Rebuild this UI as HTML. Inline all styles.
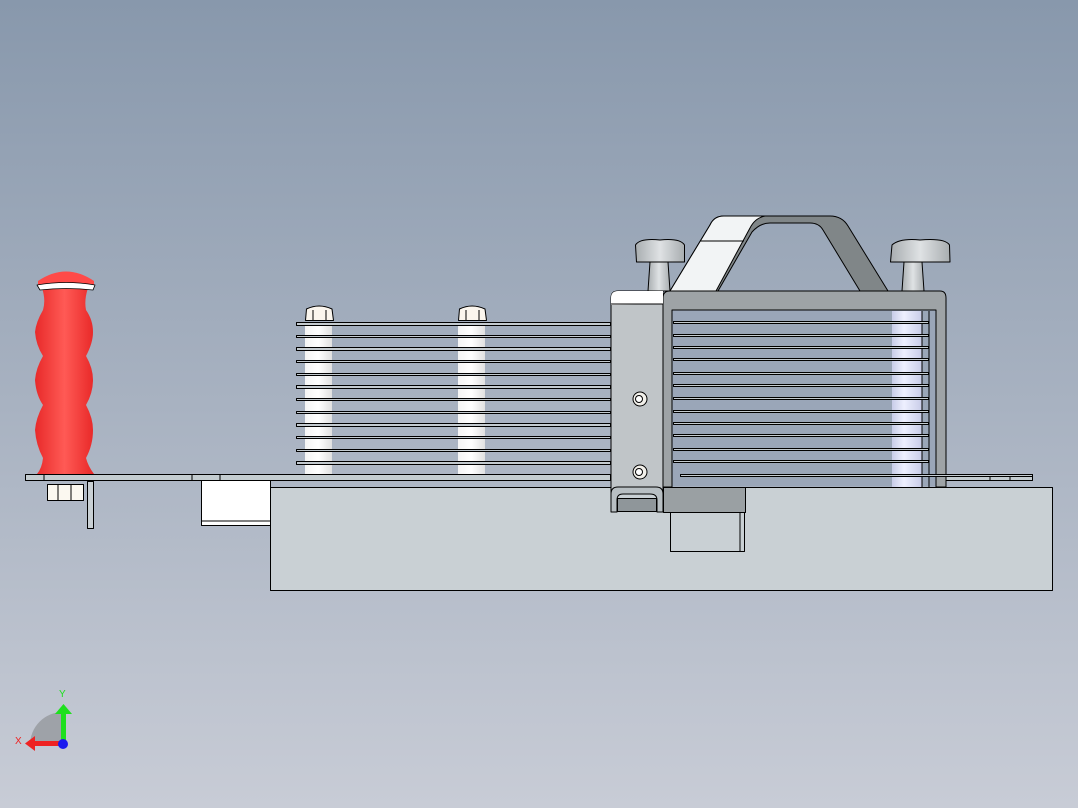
<!DOCTYPE html>
<html><head><style>html,body{margin:0;padding:0;width:1078px;height:808px;overflow:hidden}</style></head>
<body>
<svg width="1078" height="808" viewBox="0 0 1078 808" xmlns="http://www.w3.org/2000/svg" stroke-linejoin="round">
<defs>
<linearGradient id="bg" x1="0" y1="0" x2="0" y2="1"><stop offset="0" stop-color="#8898ac"/><stop offset="1" stop-color="#c8ccd6"/></linearGradient>
<linearGradient id="red" x1="0" y1="0" x2="1" y2="0"><stop offset="0" stop-color="#e82a2a"/><stop offset="0.5" stop-color="#ff5a55"/><stop offset="1" stop-color="#e82828"/></linearGradient>
<linearGradient id="pil" x1="0" y1="0" x2="1" y2="0"><stop offset="0" stop-color="#c8cce8"/><stop offset="0.4" stop-color="#eef0ff"/><stop offset="1" stop-color="#c8cce8"/></linearGradient>
<linearGradient id="col" x1="0" y1="0" x2="1" y2="0"><stop offset="0" stop-color="#f4f4f4"/><stop offset="0.5" stop-color="#ffffff"/><stop offset="1" stop-color="#e0e0e0"/></linearGradient>
<linearGradient id="knob" x1="0" y1="0" x2="1" y2="0"><stop offset="0" stop-color="#a8adb0"/><stop offset="0.5" stop-color="#dfe2e4"/><stop offset="1" stop-color="#a8adb0"/></linearGradient>
</defs>
<rect width="1078" height="808" fill="url(#bg)"/>
<g stroke="#000" stroke-width="1">
<rect x="270.5" y="487.5" width="782" height="103" fill="#c9d0d4"/>
<rect x="201.5" y="480.5" width="69" height="45" fill="#fff"/>
<line x1="201" y1="521" x2="270" y2="521"/>
<rect x="670.5" y="487.5" width="74" height="64" fill="#c9d0d4"/>
<line x1="740" y1="497" x2="740" y2="551"/>
<rect x="25.5" y="474.5" width="585" height="6" fill="#c4ccd0"/>
<rect x="610.5" y="474.5" width="422" height="6" fill="#c4ccd0"/>
<line x1="44" y1="474" x2="44" y2="481"/><line x1="192" y1="474" x2="192" y2="481"/><line x1="220" y1="474" x2="220" y2="481"/>
<line x1="990" y1="474" x2="990" y2="481"/><line x1="1010" y1="474" x2="1010" y2="481"/>
<rect x="87.5" y="481.5" width="6" height="47" fill="#c9d0d4"/>
<rect x="47.5" y="484.5" width="36" height="16" fill="#fbf8f0"/>
<line x1="58" y1="484" x2="58" y2="500"/><line x1="71" y1="484" x2="71" y2="500"/>
<path d="M42 288 Q46 300 43 310 Q36 322 35 332 Q36 345 43 356 Q36 368 35 380 Q36 395 43 405 Q36 418 35 430 Q36 445 43 458 Q42 468 37 474 L94 474 Q88 466 86 458 Q93 445 93 430 Q93 418 86 405 Q93 393 93 380 Q93 368 86 356 Q93 343 93 332 Q93 320 86 310 Q84 300 88 288 Z" fill="url(#red)" stroke="none"/>
<path d="M38 281 Q66 262 94 281 L94 286 L38 286 Z" fill="#ff4a48" stroke="none"/>
<path d="M37 285 Q66 280 95 285 L93 290 Q66 287 40 290 Z" fill="#fff" stroke-width="0.8"/>
<rect x="305" y="322" width="27" height="152" fill="url(#col)" stroke="none"/>
<rect x="458" y="322" width="27" height="152" fill="url(#col)" stroke="none"/>
<g fill="#c4cbd0">
<rect x="296.5" y="322.5" width="314" height="3"/><rect x="296.5" y="335.5" width="314" height="2"/><rect x="296.5" y="347.5" width="314" height="3"/><rect x="296.5" y="360.5" width="314" height="2"/><rect x="296.5" y="373.5" width="314" height="2"/><rect x="296.5" y="385.5" width="314" height="3"/><rect x="296.5" y="398.5" width="314" height="2"/><rect x="296.5" y="411.5" width="314" height="2"/><rect x="296.5" y="423.5" width="314" height="3"/><rect x="296.5" y="436.5" width="314" height="2"/><rect x="296.5" y="449.5" width="314" height="2"/><rect x="296.5" y="461.5" width="314" height="3"/>
</g>
<path d="M305.5 320.5 L306.5 309 Q319 303 332 309 L333.5 320.5 Z" fill="#fbf6ee"/>
<line x1="313" y1="310" x2="313" y2="320"/><line x1="326" y1="310" x2="326" y2="320"/>
<path d="M458.5 320.5 L459.5 309 Q472 303 485 309 L486.5 320.5 Z" fill="#fbf6ee"/>
<line x1="466" y1="310" x2="466" y2="320"/><line x1="479" y1="310" x2="479" y2="320"/>
<path d="M670 291 L710 225 Q714 216 724 216 L830 216 Q842 216 848 226 L888 291 L860 291 L823 230 Q819 223 810 223 L770 223 Q760 223 752 232 L718 291 Z" fill="#808688"/>
<path d="M670 291 L710 225 Q714 216 724 216 L765 216 Q755 218 750 228 L716 291 Z" fill="#f2f4f5"/>
<line x1="700" y1="241" x2="744" y2="241"/>
<path d="M648 291 L650 262 L668 262 L670 291 Z" fill="url(#knob)"/>
<path d="M636.5 262 L635.5 245 Q640 238 660 240 Q680 238 684.5 245 L684.5 262 Z" fill="url(#knob)"/>
<path d="M902 291 L904 262 L922 262 L924 291 Z" fill="url(#knob)"/>
<path d="M890.5 262 L892 245 Q900 238 920 240 Q945 238 949.5 245 L950 262 Z" fill="url(#knob)"/>
<path d="M663 487 L663 298 Q663 291 670 291 L940 291 Q946 291 946 298 L946 487 L936 487 L936 310 L672 310 L672 487 Z" fill="#9ea3a6"/>
<rect x="672.5" y="310.5" width="263" height="176" fill="#9aa6b8" stroke="none"/>
<rect x="892" y="311" width="30" height="176" fill="url(#pil)" stroke="none"/>
<line x1="922" y1="311" x2="922" y2="487"/><line x1="929" y1="311" x2="929" y2="487"/>
<g fill="#c4cbd0">
<rect x="673.5" y="321.5" width="255" height="2"/><rect x="673.5" y="334.5" width="255" height="2"/><rect x="673.5" y="346.5" width="255" height="2"/><rect x="673.5" y="358.5" width="255" height="2"/><rect x="673.5" y="372.5" width="255" height="2"/><rect x="673.5" y="384.5" width="255" height="2"/><rect x="673.5" y="397.5" width="255" height="2"/><rect x="673.5" y="410.5" width="255" height="2"/><rect x="673.5" y="422.5" width="255" height="2"/><rect x="673.5" y="434.5" width="255" height="2"/><rect x="673.5" y="448.5" width="255" height="2"/><rect x="673.5" y="460.5" width="255" height="2"/>
</g>
<rect x="680.5" y="474.5" width="352" height="2" fill="#c4cbd0"/>
<path d="M611 493 L611 298 Q611 291 618 291 L663 291 L663 493 Z" fill="#c0c5c8"/>
<path d="M611 305 L611 298 Q611 291 618 291 L663 291 L663 304 Z" fill="#fff" stroke="none"/>
<line x1="611" y1="304" x2="663" y2="304"/>
<circle cx="640" cy="399" r="7" fill="#f2f0ea"/><circle cx="639" cy="399" r="3.5" fill="#fff"/>
<circle cx="640" cy="472" r="7" fill="#f2f0ea"/><circle cx="639" cy="472" r="3.5" fill="#fff"/>
<path d="M611 512 L611 494 Q611 487 618 487 L656 487 Q663 487 663 494 L663 512 L657 512 L657 500 Q657 494 650 494 L623 494 Q617 494 617 500 L617 512 Z" fill="#b8bfc3"/>
<rect x="617.5" y="498.5" width="39" height="13" fill="#8f969a"/>
<rect x="663.5" y="487.5" width="82" height="25" fill="#9aa0a3"/>
</g>
<path d="M30 745 A33 33 0 0 1 63 712 L63 745 Z" fill="#9ea2a8"/>
<rect x="61" y="712" width="5" height="33" fill="#1ee01e"/>
<path d="M55 714 L63.5 704 L72 714 Z" fill="#1ee01e"/>
<rect x="33" y="741" width="30" height="5" fill="#ee2222"/>
<path d="M35 736 L25 743.5 L35 751 Z" fill="#ee2222"/>
<circle cx="63" cy="744" r="5" fill="#1a1aee"/>
<text x="59" y="697" font-family="Liberation Sans, sans-serif" font-size="10" fill="#1ee01e">Y</text>
<text x="15" y="744" font-family="Liberation Sans, sans-serif" font-size="10" fill="#ee2222">X</text>
</svg>
</body></html>
